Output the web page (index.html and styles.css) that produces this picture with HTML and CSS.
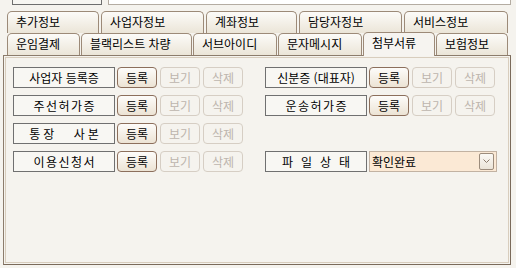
FILE: index.html
```html
<!DOCTYPE html>
<html lang="ko">
<head>
    <meta charset="UTF-8">
    <title>첨부서류</title>
    <link rel="stylesheet" href="styles.css">
</head>
<body>
    <!-- Fields above the tabs (cut off by the window) -->
    <div class="top-bar">
        <div class="top-field code"></div>
        <div class="top-field name"></div>
    </div>

    <div class="tabs">
        <div class="tab-row back">
            <div class="tab w92">추가정보</div>
            <div class="tab w103">사업자정보</div>
            <div class="tab w91">계좌정보</div>
            <div class="tab w103">담당자정보</div>
            <div class="tab w104">서비스정보</div>
        </div>
        <div class="tab-row front">
            <div class="tab w73">운임결제</div>
            <div class="tab w111">블랙리스트 차량</div>
            <div class="tab w84">서브아이디</div>
            <div class="tab w84">문자메시지</div>
            <div class="tab w72 active">첨부서류</div>
            <div class="tab w72">보험정보</div>
        </div>
    </div>

    <div class="panel">
        <div class="doc-grid">
            <div class="doc-row">
                <div class="doc-label">사업자 등록증</div>
                <button class="btn">등록</button>
                <button class="btn" disabled>보기</button>
                <button class="btn" disabled>삭제</button>
            </div>
            <div class="doc-row">
                <div class="doc-label">신분증 (대표자)</div>
                <button class="btn">등록</button>
                <button class="btn" disabled>보기</button>
                <button class="btn" disabled>삭제</button>
            </div>

            <div class="doc-row">
                <div class="doc-label narrow">주선허가증</div>
                <button class="btn">등록</button>
                <button class="btn" disabled>보기</button>
                <button class="btn" disabled>삭제</button>
            </div>
            <div class="doc-row">
                <div class="doc-label narrow">운송허가증</div>
                <button class="btn">등록</button>
                <button class="btn" disabled>보기</button>
                <button class="btn" disabled>삭제</button>
            </div>

            <div class="doc-row">
                <div class="doc-label split">통장 사본</div>
                <button class="btn">등록</button>
                <button class="btn" disabled>보기</button>
                <button class="btn" disabled>삭제</button>
            </div>
            <div class="doc-row"></div>

            <div class="doc-row">
                <div class="doc-label narrow">이용신청서</div>
                <button class="btn">등록</button>
                <button class="btn" disabled>보기</button>
                <button class="btn" disabled>삭제</button>
            </div>
            <div class="doc-row">
                <div class="doc-label wide">파일상태</div>
                <div class="combo">
                    <span>확인완료</span>
                    <span class="combo-btn">
                        <svg width="7" height="5" viewBox="0 0 7 5"><path d="M0.5 0.5 L3.5 3.5 L6.5 0.5" fill="none" stroke="#8a7a6a" stroke-width="1"/></svg>
                    </span>
                </div>
            </div>
        </div>
    </div>
</body>
</html>
```

FILE: styles.css
```css
body {
    margin: 0;
    background-color: #f5f3ee;
    font-family: 'Noto Sans CJK KR', 'Noto Sans', sans-serif;
    font-size: 12px;
    color: #000;
    overflow: hidden;
}

/* top fields */
.top-bar {
    display: flex;
    height: 20px;
    margin-top: -15px;
    padding-left: 12px;
    gap: 6px;
}

.top-field {
    box-sizing: border-box;
    height: 20px;
}

.top-field.code {
    width: 90px;
    border: 1px solid #6e6e6e;
    background-color: #f7f6f2;
}

.top-field.name {
    width: 403px;
    border: 1px solid #b4aca2;
    background-color: #fff;
}

/* tabs */
.tabs {
    margin-top: 6px;
    padding-left: 7px;
}

.tab-row {
    display: flex;
    height: 22px;
}

.tab-row.back {
    gap: 2px;
}

.tab-row.front {
    gap: 1px;
}

.tab {
    box-sizing: border-box;
    height: 22px;
    padding: 0 0 0 8px;
    border: 1px solid #9c8a78;
    border-bottom: none;
    border-radius: 5px 5px 0 0;
    background: linear-gradient(#fcfbf8, #ebe5d8);
    line-height: 20px;
    white-space: nowrap;
}

.tab.active {
    position: relative;
    z-index: 1;
    height: 24px;
    margin-top: -1px;
    background: #f6f4f0;
}

.w72 { width: 72px; }
.w73 { width: 73px; }
.w84 { width: 84px; }
.w91 { width: 91px; }
.w92 { width: 92px; }
.w103 { width: 103px; }
.w104 { width: 104px; }
.w111 { width: 111px; }

/* panel */
.panel {
    box-sizing: border-box;
    height: 210px;
    margin: 0 5px 0 3px;
    padding: 11px 0 0 9px;
    border: 1px solid #8c7c6c;
    border-right-color: #7a6a5a;
    border-bottom-color: #7a6a5a;
    box-shadow: inset 0 0 0 1px #f5f3ee, inset 0 0 0 2px #d8cdbd;
}

.doc-grid {
    display: grid;
    grid-template-columns: 252px 240px;
    grid-auto-rows: 21px;
    row-gap: 7px;
}

.doc-row {
    display: flex;
    gap: 3px;
}

.doc-label {
    box-sizing: border-box;
    width: 102px;
    height: 21px;
    margin-right: -1px;
    border: 1px solid #707070;
    background-color: #f8f7f3;
    text-align: center;
    line-height: 19px;
    white-space: nowrap;
}

.doc-label.narrow {
    letter-spacing: 1.5px;
    text-indent: 1.5px;
}

.doc-label.split {
    letter-spacing: 3px;
    word-spacing: 10px;
    text-indent: 3px;
}

.doc-label.wide {
    letter-spacing: 8px;
    text-indent: 8px;
}

.btn {
    box-sizing: border-box;
    width: 40px;
    height: 21px;
    padding: 0;
    border: 1px solid #8c6f5c;
    border-radius: 4px;
    background: linear-gradient(#fdfcfa, #ece3d4);
    font-family: inherit;
    font-size: 12px;
    color: #000;
    line-height: 19px;
}

.btn:disabled {
    border-color: #d6cec4;
    background: #f5f3ee;
    color: #bdb5ad;
}

.combo {
    box-sizing: border-box;
    display: flex;
    justify-content: space-between;
    align-items: center;
    width: 128px;
    height: 21px;
    padding: 0 2px 0 2px;
    border: 1px solid #c2b2a2;
    background-color: #fbe9d5;
    line-height: 19px;
}

.combo-btn {
    box-sizing: border-box;
    display: flex;
    justify-content: center;
    align-items: center;
    width: 15px;
    height: 17px;
    border: 1px solid #9c8c7c;
    border-radius: 2px;
    background: linear-gradient(#fbf9f5, #ebe4d8);
}
```
